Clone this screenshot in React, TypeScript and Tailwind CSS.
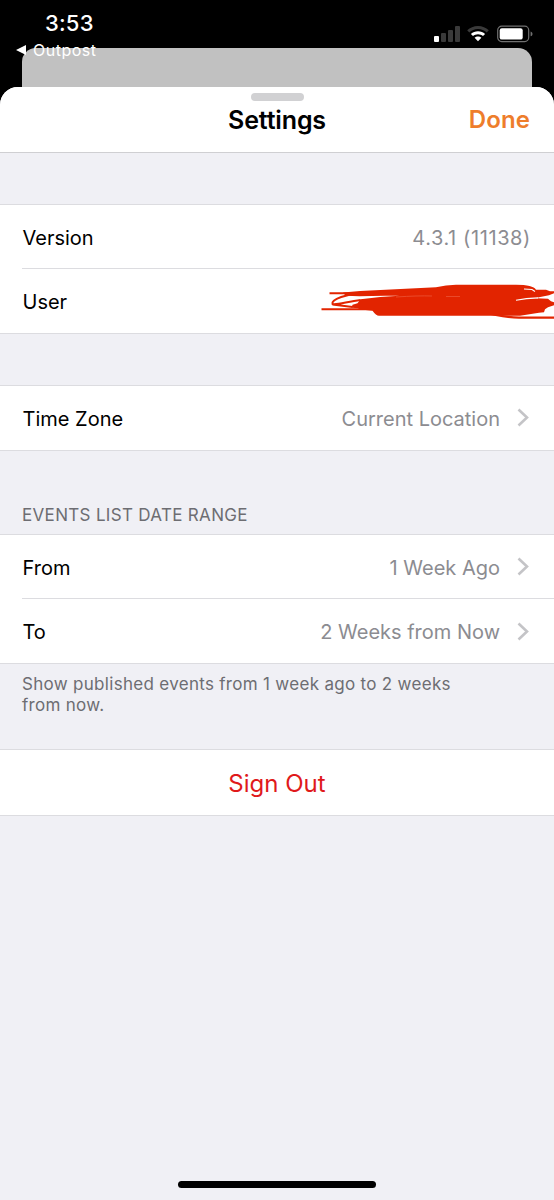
import { clsx } from "clsx";
import type { ReactNode } from "react";

function StatusIcons() {
  return (
    <div className="flex items-center">
      <svg width="26" height="16" viewBox="0 0 26 16">
        <rect x="0" y="10" width="5" height="6" rx="1" fill="#fff" />
        <rect x="7" y="7" width="5" height="9" rx="1" fill="#3a3a3a" />
        <rect x="14" y="4" width="5" height="12" rx="1" fill="#3a3a3a" />
        <rect x="21" y="0" width="5" height="16" rx="1" fill="#3a3a3a" />
      </svg>
      <svg className="ml-[7px]" width="22" height="16" viewBox="0 0 22 16">
        <path d="M11 0C6.800 0 3 1.600 0.200 4.300L2.300 6.400C4.600 4.200 7.700 2.900 11 2.900s6.400 1.300 8.700 3.500l2.100-2.100C19 1.600 15.200 0 11 0Z" fill="#3a3a3a" />
        <path d="M11 5.200c-2.700 0-5.200 1-7.100 2.800L6 10.100c1.300-1.200 3.100-1.900 5-1.900s3.700.7 5 1.900L18.100 8C16.200 6.200 13.700 5.200 11 5.200Z" fill="#fff" />
        <path d="M11 10.400c-1.300 0-2.500.5-3.400 1.300L11 15.300l3.400-3.600c-.9-.8-2.100-1.300-3.400-1.300Z" fill="#fff" />
      </svg>
      <svg className="ml-2" width="36" height="18" viewBox="0 0 36 18">
        <rect x="0.700" y="1.200" width="31" height="15.400" rx="4" fill="none" stroke="#707070" strokeWidth="1.200" />
        <rect x="2.700" y="3.200" width="23" height="11.400" rx="2.200" fill="#fff" />
        <path d="M33.600 6.500c1.300.5 1.900 1.300 1.900 2.400s-.6 1.900-1.900 2.400Z" fill="#707070" />
      </svg>
    </div>
  );
}

function Chevron() {
  return (
    <svg className="ml-[17px] mr-[2px]" width="12" height="19" viewBox="0 0 12 19" fill="none">
      <path d="M1.500 1.500 10 9.500 1.500 17.500" stroke="#c4c4c7" strokeWidth="2.600" />
    </svg>
  );
}

function Group({ children, className }: { children: ReactNode; className?: string }) {
  return <div className={clsx("border-y border-[#dcdce0] bg-white", className)}>{children}</div>;
}

type RowProps = {
  label: string;
  value?: string;
  link?: boolean;
  divider?: boolean;
  valueClass?: string;
  children?: ReactNode;
};

function Row({ label, value, link, divider, valueClass, children }: RowProps) {
  return (
    <div
      className={clsx(
        "ml-[22px] flex items-center pr-[23px] text-[20px] leading-6",
        divider ? "h-[65px] border-t border-[#dcdce0]" : "h-[63px]",
      )}
    >
      <span className="flex-1 pl-[0.5px] pt-[2px] text-black">{label}</span>
      {value && <span className={clsx("pt-[2px] text-[#8c8c91]", valueClass)}>{value}</span>}
      {link && <Chevron />}
      {children}
    </div>
  );
}

// Red marker strokes covering the user name
function Scribble() {
  return (
    <svg className="-mr-[23px] mt-[2px]" width="234" height="44" viewBox="320 280 234 44" fill="none" stroke="#e22400" strokeWidth="2.200">
      <path
        d="M343 292.500 360 291 436 287.300q10-2.500 20-2.500h60q17 0 20 5h10l4 1.500h4v2l-5 2-10 2-3 1 12 .5 3 2.500 3 1v3l-6 2-3 2-1 3-5 .5-19 3H379q-3 0-6.500-5l-14-1.500v-1l-7-.5 1-3 5-1.500 3-4q20-3 39-3.500-22-.5-40 .5l-14-.5Z"
        fill="#e22400"
        stroke="none"
      />
      <path d="M329.500 293.200h20M360 293.500C348 294 331 299 332.500 304c5 1 15-2.500 28-4M332.500 304.500l20 2.500M321.500 309.200h52" strokeWidth="2" />
      <path d="M491 314c8 1.500 17 3.600 28 3.600h36" />
      <path d="M516 300.200q10-2 22-2.300M524 289l8 .5 3 2" stroke="#fff" strokeWidth="1.100" />
      <path d="M396 297q22-1.500 36-1M446 296.500h14" stroke="#ee5a3c" strokeWidth="0.700" />
    </svg>
  );
}

export default function App() {
  return (
    <div className="flex h-[1200px] w-[554px] flex-col overflow-hidden bg-black font-['Inter','Liberation_Sans',sans-serif]">
      <div className="relative h-[87px] shrink-0">
        <div className="flex items-start justify-between pl-[45px] pr-[21px] pt-[11px] text-white">
          <span className="text-[22px] font-medium leading-6 tracking-[0.2px]">3:53</span>
          <div className="mt-[14px]">
            <StatusIcons />
          </div>
        </div>
        {/* card peeking out behind the sheet */}
        <div className="absolute bottom-[-20px] left-[22px] right-[22px] top-12 rounded-t-[14px] bg-[#c1c1c1]" />
        <div className="absolute left-4 top-[40px] flex items-center text-white">
          <svg width="10" height="10" viewBox="0 0 10 10">
            <path d="M0 5 10 0v10Z" fill="#fff" />
          </svg>
          <span className="ml-[7px] text-[16px] leading-5 tracking-[0.5px]">Outpost</span>
        </div>
      </div>

      <div className="relative flex flex-1 flex-col overflow-hidden rounded-t-[18px] bg-[#f0f0f5]">
        <header className="h-[66px] border-b border-[#cfcfd2] bg-white">
          <div className="mx-auto h-[19px] w-[53px] pt-[6px]">
            <div className="h-2 rounded-full bg-[#d1d1d3]" />
          </div>
          <div className="grid grid-cols-3 items-center px-[24px] text-[24px] font-semibold leading-7">
            <span />
            <h1 className="text-center text-[25px] tracking-[-0.15px]">Settings</h1>
            <button className="text-right tracking-[0.1px] text-[#ee7d2b]">Done</button>
          </div>
        </header>

        <Group className="mt-[51px]">
          <Row label="Version" value="4.3.1 (11138)" valueClass="tracking-[0.6px]" />
          <Row label="User" divider>
            <Scribble />
          </Row>
        </Group>

        <Group className="mt-[51px]">
          <div className="pb-px">
            <Row label="Time Zone" value="Current Location" link />
          </div>
        </Group>

        <h2 className="mt-[53px] pl-[22px] text-[17px] leading-[22px] tracking-[0.32px] text-[#6d6d72]">
          EVENTS LIST DATE RANGE
        </h2>
        <Group className="mt-2">
          <Row label="From" value="1 Week Ago" link />
          <Row label="To" value="2 Weeks from Now" link divider />
        </Group>
        <p className="mt-[10px] w-[480px] pl-[22px] text-[17px] leading-[20.500px] tracking-[0.3px] text-[#6d6d72]">
          Show published events from 1 week ago to 2 weeks from now.
        </p>

        <Group className="mt-[34px]">
          <button className="h-[65px] w-full pt-[3px] text-[24px] text-[#e0191b]">Sign Out</button>
        </Group>

        <div className="mx-auto mb-[12px] mt-auto h-[7px] w-[198px] rounded-full bg-black" />
      </div>
    </div>
  );
}
